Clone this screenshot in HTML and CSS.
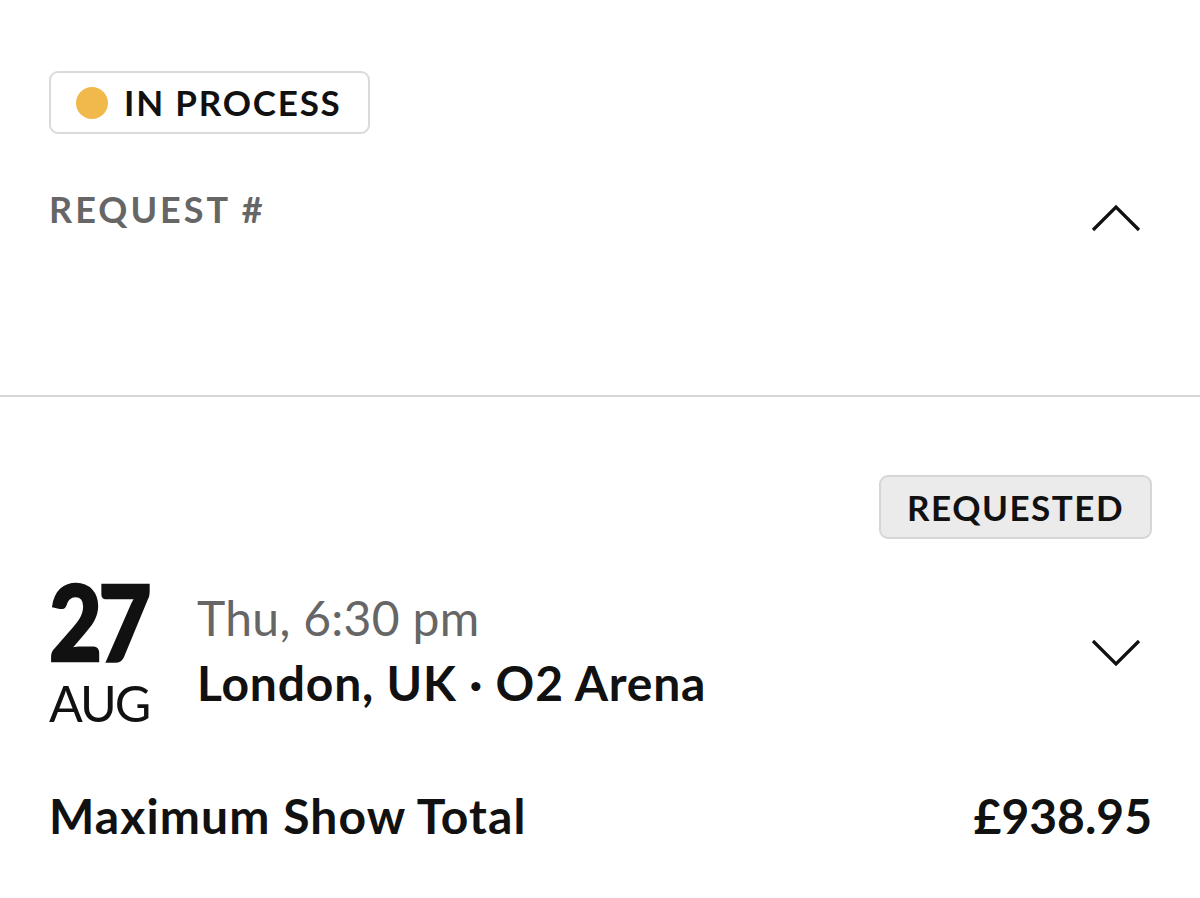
FILE: index.html
```html
<!DOCTYPE html>
<html lang="en">
<head>
  <meta charset="UTF-8">
  <title>Request</title>
  <link rel="stylesheet" href="styles.css">
</head>
<body>
  <section class="request">
    <span class="status"><span class="dot"></span>IN PROCESS</span>
    <div class="request-row">
      <span class="label">REQUEST #</span>
      <svg class="chevron up" width="52" height="30" viewBox="0 0 52 30">
        <polyline points="2,27 25,4 48,27" fill="none" stroke="#111" stroke-width="3.2"/>
      </svg>
    </div>
  </section>

  <section class="show">
    <div class="show-head">
      <span class="tag">REQUESTED</span>
    </div>
    <div class="show-row">
      <div class="date">
        <div class="day">27</div>
        <div class="month">AUG</div>
      </div>
      <div class="info">
        <div class="time">Thu, 6:30 pm</div>
        <div class="venue">London, UK · O2 Arena</div>
      </div>
      <svg class="chevron down" width="52" height="30" viewBox="0 0 52 30">
        <polyline points="2,3 25,26 48,3" fill="none" stroke="#111" stroke-width="3.2"/>
      </svg>
    </div>
    <div class="total-row">
      <span>Maximum Show Total</span>
      <span class="price">£938.95</span>
    </div>
  </section>
</body>
</html>
```

FILE: styles.css
```css
body {
  margin: 0;
  font-family: Lato, "Open Sans", sans-serif;
  color: #111;
  background: #fff;
}
.request {
  padding: 71px 50px 0 49px;
  height: 324px;
  border-bottom: 2px solid #d6d6d6;
}
.status {
  display: inline-flex;
  align-items: center;
  height: 59px;
  padding: 0 26px 0 25px;
  border: 2px solid #dadada;
  border-radius: 9px;
  font-size: 35px;
  font-weight: 700;
  letter-spacing: 1.8px;
  line-height: 1;
}
.dot {
  width: 32px;
  height: 32px;
  border-radius: 50%;
  background: #f1b94b;
  margin-right: 16px;
}
.request-row {
  display: flex;
  justify-content: space-between;
  align-items: flex-start;
  margin-top: 57px;
}
.label {
  font-size: 36px;
  font-weight: 700;
  letter-spacing: 3px;
  color: #666;
  line-height: 1;
}
.chevron.up {
  margin: 12px 7px 0 0;
}
.show {
  padding: 78px 48px 0 49px;
}
.show-head {
  display: flex;
  justify-content: flex-end;
}
.tag {
  display: inline-flex;
  align-items: center;
  height: 60px;
  padding: 0 26px;
  background: #ebebeb;
  border: 2px solid #d6d6d6;
  border-radius: 9px;
  font-size: 35px;
  font-weight: 700;
  letter-spacing: 1.5px;
  line-height: 1;
}
.show-row {
  display: flex;
  align-items: flex-start;
  margin-top: 29px;
}
.date {
  width: 148px;
}
.day {
  font-size: 105px;
  font-weight: 900;
  letter-spacing: -4px;
  line-height: 1;
  -webkit-text-stroke: 2.5px #111;
  transform: scaleX(0.87);
  transform-origin: left center;
}
.month {
  font-size: 50px;
  font-weight: 400;
  letter-spacing: -2px;
  line-height: 1;
  margin-top: 5px;
}
.info {
  flex: 1;
  margin-top: 26px;
}
.time {
  font-size: 48px;
  color: #666;
  letter-spacing: 0.3px;
  line-height: 1;
}
.venue {
  font-size: 48px;
  font-weight: 700;
  letter-spacing: 0.8px;
  line-height: 1;
  margin-top: 17px;
}
.chevron.down {
  margin: 70px 9px 0 0;
}
.total-row {
  display: flex;
  justify-content: space-between;
  margin-top: 64px;
  font-size: 48px;
  font-weight: 700;
  letter-spacing: 1.1px;
  line-height: 1;
}
.price {
  letter-spacing: 0;
}
```
